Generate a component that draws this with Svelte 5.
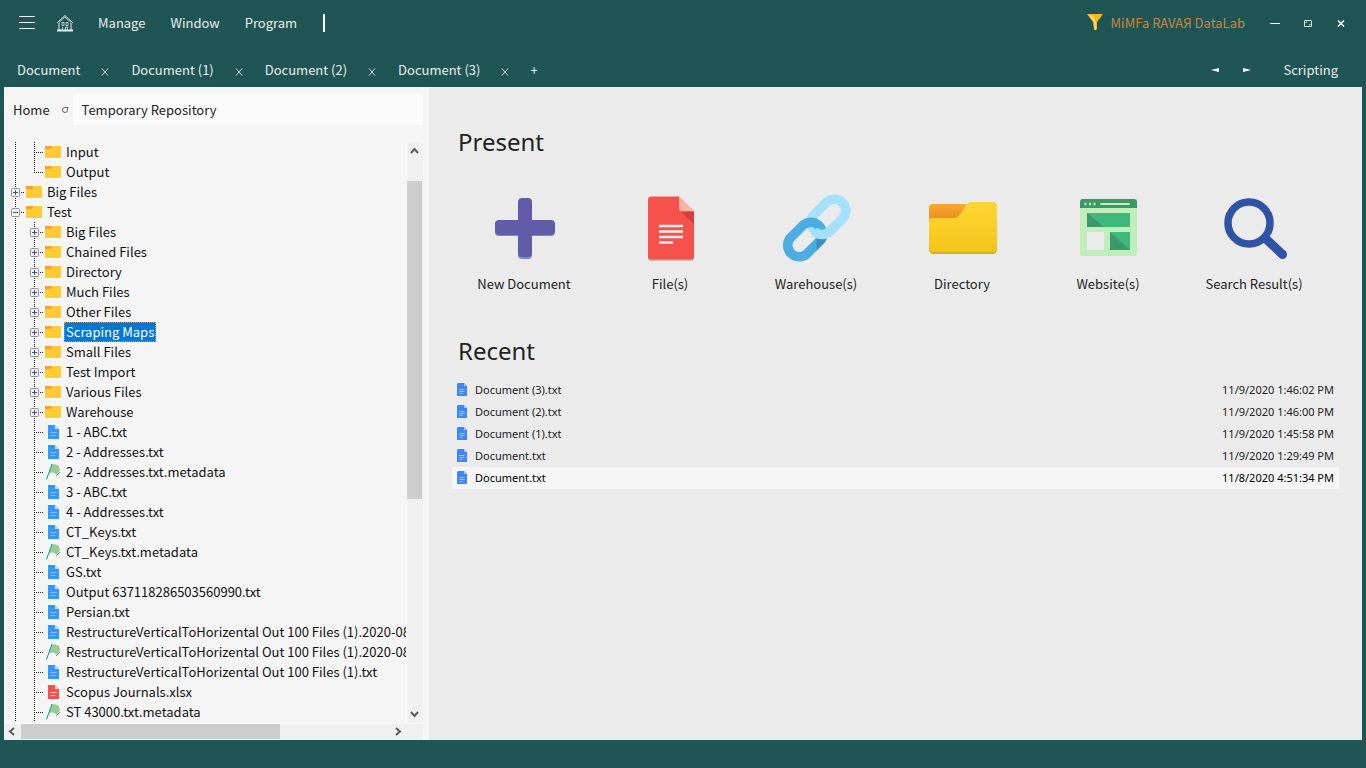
<script lang="ts">
	type Item = {
		name: string;
		kind: 'folder' | 'txt' | 'xlsx' | 'meta';
		level?: number;
		box?: 'plus' | 'minus';
		last?: boolean;
	};

	const menus = ['Manage', 'Window', 'Program'];
	const tabs = ['Document', 'Document (1)', 'Document (2)', 'Document (3)'];

	const tree: Item[] = [
		{ name: 'Input', kind: 'folder' },
		{ name: 'Output', kind: 'folder', last: true },
		{ name: 'Big Files', kind: 'folder', level: 1, box: 'plus' },
		{ name: 'Test', kind: 'folder', level: 1, box: 'minus' },
		{ name: 'Big Files', kind: 'folder', box: 'plus' },
		{ name: 'Chained Files', kind: 'folder', box: 'plus' },
		{ name: 'Directory', kind: 'folder', box: 'plus' },
		{ name: 'Much Files', kind: 'folder', box: 'plus' },
		{ name: 'Other Files', kind: 'folder', box: 'plus' },
		{ name: 'Scraping Maps', kind: 'folder', box: 'plus' },
		{ name: 'Small Files', kind: 'folder', box: 'plus' },
		{ name: 'Test Import', kind: 'folder', box: 'plus' },
		{ name: 'Various Files', kind: 'folder', box: 'plus' },
		{ name: 'Warehouse', kind: 'folder', box: 'plus' },
		{ name: '1 - ABC.txt', kind: 'txt' },
		{ name: '2 - Addresses.txt', kind: 'txt' },
		{ name: '2 - Addresses.txt.metadata', kind: 'meta' },
		{ name: '3 - ABC.txt', kind: 'txt' },
		{ name: '4 - Addresses.txt', kind: 'txt' },
		{ name: 'CT_Keys.txt', kind: 'txt' },
		{ name: 'CT_Keys.txt.metadata', kind: 'meta' },
		{ name: 'GS.txt', kind: 'txt' },
		{ name: 'Output 637118286503560990.txt', kind: 'txt' },
		{ name: 'Persian.txt', kind: 'txt' },
		{ name: 'RestructureVerticalToHorizental Out 100 Files (1).2020-08-2', kind: 'txt' },
		{ name: 'RestructureVerticalToHorizental Out 100 Files (1).2020-08-2', kind: 'meta' },
		{ name: 'RestructureVerticalToHorizental Out 100 Files (1).txt', kind: 'txt' },
		{ name: 'Scopus Journals.xlsx', kind: 'xlsx' },
		{ name: 'ST 43000.txt.metadata', kind: 'meta' }
	];

	const tiles = [
		{ label: 'New Document', icon: 'plus' },
		{ label: 'File(s)', icon: 'file' },
		{ label: 'Warehouse(s)', icon: 'chain' },
		{ label: 'Directory', icon: 'folder' },
		{ label: 'Website(s)', icon: 'site' },
		{ label: 'Search Result(s)', icon: 'search' }
	];

	const recent = [
		{ name: 'Document (3).txt', date: '11/9/2020 1:46:02 PM' },
		{ name: 'Document (2).txt', date: '11/9/2020 1:46:00 PM' },
		{ name: 'Document (1).txt', date: '11/9/2020 1:45:58 PM' },
		{ name: 'Document.txt', date: '11/9/2020 1:29:49 PM' },
		{ name: 'Document.txt', date: '11/8/2020 4:51:34 PM' }
	];

	let selected = $state(9);
	let activeRecent = $state(4);
	let path = $state('Temporary Repository');
	let command = $state('');
</script>

{#snippet guide(vertical: 'full' | 'half', branch: boolean)}
	<svg class="guide" width="19" height="20" viewBox="0 0 19 20" aria-hidden="true">
		<path d={vertical === 'full' ? 'M9.5 0V20' : 'M9.5 0V11'} stroke="#222" stroke-dasharray="1 1" />
		{#if branch}<path d="M11 10.5H20" stroke="#222" stroke-dasharray="1 1" />{/if}
	</svg>
{/snippet}

{#snippet expander(kind: string)}
	<button class="expander" aria-label={kind === 'plus' ? 'Expand' : 'Collapse'}>
		<svg width="19" height="20" viewBox="0 0 19 20">
			<path d="M9.5 0V20M15 10.5H20" stroke="#222" stroke-dasharray="1 1" />
			<rect x="5.5" y="6.5" width="8" height="8" rx="1" fill="#f4f4f4" stroke="#919191" />
			<path d={kind === 'plus' ? 'M7 10.5h5M9.5 8v5' : 'M7 10.5h5'} stroke="#3a50a8" />
		</svg>
	</button>
{/snippet}

{#snippet nodeIcon(kind: string)}
	<svg width="18" height="18" viewBox="0 0 18 18" aria-hidden="true">
		{#if kind === 'folder'}
			<path d="M1 3h8l-2 4H1z" fill="#ff9d2e" />
			<path d="M1 6h6l3-3h7v12H1z" fill="#ffcb33" />
			<path d="M1 15.5h16" stroke="#fff" />
		{:else if kind === 'meta'}
			<path d="M8 2c3-2 5 0 7 1l1 5-4 4c-1-3-4-2-7-2z" fill="#99cc99" />
			<path d="M8 1L2.500 16.500" stroke="#009999" />
			<path d="M12 13l4-4" stroke="#669999" />
		{:else}
			<path d="M4 2h7l4 4v10H4z" fill={kind === 'txt' ? '#3397ff' : '#ff4d4d'} />
			<path d="M11 2v4h4z" fill={kind === 'txt' ? '#cce4ff' : '#ffcccc'} />
			<path d="M6.500 9.500h6M6.500 12.500h5" stroke={kind === 'txt' ? '#99bbff' : '#ffcccc'} />
		{/if}
	</svg>
{/snippet}

{#snippet arrow(d: string)}
	<svg width="9" height="9" viewBox="0 0 9 9" aria-hidden="true">
		<path {d} fill="none" stroke="#5b5b5b" stroke-width="2" />
	</svg>
{/snippet}

<div class="window">
	<header class="titlebar">
		<button class="burger" aria-label="Menu">
			<svg width="16" height="16" viewBox="0 0 16 16"><path d="M0 1.500h16M0 7.500h16M0 13.500h16" stroke="#eef2f2" /></svg>
		</button>
		<button class="home" aria-label="Start page">
			<svg width="18" height="18" viewBox="0 0 18 18" fill="none" stroke="#e8eeee">
				<path d="M1 9L9 1.500 17 9M3 9v7M15 9v7" />
				<path d="M3 8.500L9 3l6 5.500M6 8.500v3h2v-3zM10 8.500v3h2v-3zM6.500 16v-3M9.500 16v-3h2v3" stroke="#b9cccc" />
				<path d="M1 16.500h16" stroke-width="2" />
			</svg>
		</button>
		<nav class="menus">
			{#each menus as menu}
				<button>{menu}</button>
			{/each}
		</nav>
		<input class="command" aria-label="Command" bind:value={command} />
		<div class="brand">
			<svg width="18" height="18" viewBox="0 0 18 18" aria-hidden="true">
				<path d="M1 0h16l-6 8v7l-1 1H8L7 8z" fill="#fbb917" />
				<path d="M3 1h3l4 7v8H9L8 8z" fill="#ffdc83" />
			</svg>
			<span>MiMFa RAVAЯ DataLab</span>
		</div>
		<div class="controls">
			<button aria-label="Minimize"><svg width="10" height="10" viewBox="0 0 10 10"><path d="M0 5.500h10" stroke="#fff" /></svg></button>
			<button aria-label="Maximize">
				<svg width="10" height="10" viewBox="0 0 10 10"><path d="M1.500 2.500h7v6h-7zM3 5V4h1M6 7h1V6" fill="none" stroke="#d9e2e2" /></svg>
			</button>
			<button aria-label="Close"><svg width="10" height="10" viewBox="0 0 10 10"><path d="M2 2.500l6 6M8 2.500l-6 6" stroke="#fff" stroke-width="1.500" /></svg></button>
		</div>
	</header>

	<div class="tabbar">
		{#each tabs as tab}
			<div class="tab">
				<button>{tab}</button>
				<button class="close" aria-label="Close {tab}">
					<svg width="8" height="8" viewBox="0 0 8 8"><path d="M1 0.500l6 7M7 0.500l-6 7" stroke="#cbd8d8" /></svg>
				</button>
			</div>
		{/each}
		<button class="add">+</button>
		<div class="tabnav">
			<button aria-label="Previous"><svg width="8" height="6" viewBox="0 0 8 6"><path d="M8 1v4L0 3z" fill="#fff" /></svg></button>
			<button aria-label="Next"><svg width="8" height="6" viewBox="0 0 8 6"><path d="M0 1v4l8-2z" fill="#fff" /></svg></button>
			<button class="scripting">Scripting</button>
		</div>
	</div>

	<div class="body">
		<aside>
			<div class="address">
				<button>Home</button>
				<button class="reload" aria-label="Reload">
					<svg width="8" height="8" viewBox="0 0 8 8"><path d="M7.500 1.500H4A2.500 2.500 0 1 0 6.500 4V2" fill="none" stroke="#666" /></svg>
				</button>
				<input aria-label="Location" bind:value={path} />
			</div>
			<div class="treebox">
				<ul class="tree">
					{#each tree as item, i}
						<li>
							{#if item.level === 1}
								{@render expander(item.box ?? 'plus')}
							{:else}
								{@render guide('full', false)}
								{#if item.box}
									{@render expander(item.box)}
								{:else}
									{@render guide(item.last ? 'half' : 'full', true)}
								{/if}
							{/if}
							{@render nodeIcon(item.kind)}
							<button class="node" class:selected={selected === i} onclick={() => (selected = i)}>{item.name}</button>
						</li>
					{/each}
				</ul>
				<div class="vbar">
					<button aria-label="Scroll up">{@render arrow('M1 7l3.500-4L8 7')}</button>
					<div class="track"><span class="before"></span><span class="thumb"></span><span class="after"></span></div>
					<button aria-label="Scroll down">{@render arrow('M1 2l3.500 4L8 2')}</button>
				</div>
				<div class="hbar">
					<button aria-label="Scroll left">{@render arrow('M6 1L2 4.500 6 8')}</button>
					<div class="track"><span class="thumb"></span><span class="after"></span></div>
					<button aria-label="Scroll right">{@render arrow('M3 1l4 3.500L3 8')}</button>
				</div>
			</div>
		</aside>

		<main>
			<h2>Present</h2>
			<div class="tiles">
				{#each tiles as tile}
					<button class="tile">
						<svg width="72" height="72" viewBox="-1 0 72 72" aria-hidden="true">
							{#if tile.icon === 'plus'}
								<path d="M33 7h6q4 0 4 4v19h19q4 0 4 4v6q0 4-4 4H43v19q0 4-4 4h-6q-4 0-4-4V44H10q-4 0-4-4v-6q0-4 4-4h19V11q0-4 4-4z" fill="#7b88cc" />
								<path d="M33 6h6q4 0 4 4v18h19q4 0 4 4v6q0 5-4 5H43v18q0 4-4 4h-6q-4 0-4-4V43H10q-4 0-4-5v-6q0-4 4-4h19V10q0-4 4-4z" fill="#615ca8" />
							{:else if tile.icon === 'file'}
								<path d="M16 5h28l15 15v46q0 3-3 3H16q-3 0-3-3V8q0-3 3-3z" fill="#c9b9b9" />
								<path d="M16 4.500h28l15 15v45q0 3-3 3H16q-3 0-3-3v-57q0-3 3-3z" fill="#f5524c" />
								<path d="M44 4.500l15 15H47q-3 0-3-3z" fill="#fbb4a4" />
								<path d="M46 19.500h13v13z" fill="#d1403f" />
								<path d="M24 34h24M24 39.500h24M24 45h24M24 50.500h14" stroke="#f1eef1" stroke-width="2.500" />
							{:else if tile.icon === 'chain'}
								<g fill="none" stroke-width="9.500">
									<path d="M45.900 9.900L32.900 22.900A11.500 11.500 0 0 0 49.100 39.100L62.100 26.100A11.500 11.500 0 0 0 45.900 9.900z" stroke="#a5e1ff" />
									<path d="M22.400 32.900L9.400 45.900A11.500 11.500 0 0 0 25.600 62.100L38.600 49.100A11.500 11.500 0 0 0 22.400 32.900z" stroke="#4bade2" />
								</g>
								<path d="M35.500 45h10.500q0 4-4.200 7.300L35.500 58.600z" fill="#3f8fc0" />
								<path d="M32.900 39.100A11.500 11.500 0 0 0 49.100 39.100L55 33.200" fill="none" stroke="#a5e1ff" stroke-width="9.500" />
							{:else if tile.icon === 'folder'}
								<path d="M6 12h30q6 0 6 5v14H2V16q0-4 4-4z" fill="url(#orange)" />
								<path d="M2 29q0-3 4-3h20q5 0 8-5l4-6q3-5 8-5h19q5 0 5 5v42q0 5-5 5H7q-5 0-5-5z" fill="#d9ad18" />
								<path d="M2 29q0-3 4-3h20q5 0 8-5l4-6q3-5 8-5h19q5 0 5 5v41q0 4-5 4H7q-5 0-5-4z" fill="url(#yellow)" />
							{:else if tile.icon === 'site'}
								<g transform="translate(-1 0)">
									<rect x="8" y="7" width="57" height="57" rx="2" fill="#bfeebb" />
									<path d="M11 7h51q3 0 3 3v6H8v-6q0-3 3-3z" fill="#3b9868" />
									<path d="M29 12h28" stroke="#bfeebb" stroke-width="2" stroke-linecap="round" />
									<path d="M12.500 12h2M17 12h2M21.500 12h2" stroke="#bfeebb" stroke-width="2.500" />
									<path d="M15 21h43v14H15zM38 40h20v18H38z" fill="#3fba7c" />
									<path d="M15 21l17 14H15zM38 40l20 18H38z" fill="#3b9868" />
									<path d="M15 40h17v18H15z" fill="#ebebeb" />
								</g>
							{:else}
								<circle cx="30" cy="31" r="21" fill="none" stroke="#2f54a5" stroke-width="7.500" />
								<path d="M45 45l18.500 17.500" stroke="#2f54a5" stroke-width="9" />
								<circle cx="63.500" cy="62.500" r="4.500" fill="#2f54a5" />
							{/if}
							<defs>
								<linearGradient id="yellow" x2="0" y2="1"><stop stop-color="#ffd633" /><stop offset="1" stop-color="#f2c51a" /></linearGradient>
								<linearGradient id="orange" x2="0" y2="1"><stop stop-color="#f9a72e" /><stop offset="1" stop-color="#e08a18" /></linearGradient>
							</defs>
						</svg>
						<span>{tile.label}</span>
					</button>
				{/each}
			</div>

			<h2>Recent</h2>
			<table class="recent">
				<tbody>
					{#each recent as file, i}
						<tr class:active={activeRecent === i} onclick={() => (activeRecent = i)}>
							<td class="icon">
								<svg width="10" height="14" viewBox="0 0 10 14" aria-hidden="true">
									<path d="M1 0h6l3 3v10H0V1z" fill="#4285f4" />
									<path d="M7 0v3h3z" fill="#a9c7fa" />
									<path d="M2.500 6.500h5M2.500 8.500h5M2.500 10.500h3" stroke="#a9c7fa" />
								</svg>
							</td>
							<td>{file.name}</td>
							<td class="date">{file.date}</td>
						</tr>
					{/each}
				</tbody>
			</table>
		</main>
	</div>
</div>

<style>
	:global(body) {
		background: #205555;
	}

	.window {
		display: flex;
		flex-direction: column;
		height: 100vh;
		box-sizing: border-box;
		padding: 0 4px 28px;
		background: #205555;
		font-family: "Noto Sans CJK SC", "Noto Sans", sans-serif;
		font-size: 13px;
		line-height: 20px;
		color: #222;
	}

	button,
	input {
		font: inherit;
		color: inherit;
		background: none;
		border: 0;
		padding: 0;
		margin: 0;
	}

	svg {
		display: block;
		flex: none;
	}

	/* title bar */
	.titlebar {
		display: flex;
		align-items: center;
		height: 46px;
		flex: none;
		padding: 0 16px 0 15px;
		color: #e9eeee;
	}

	.home {
		margin-left: 21px;
	}

	.menus {
		display: flex;
		gap: 25px;
		margin-left: 24px;
	}

	.command {
		flex: 1;
		min-width: 0;
		height: 18px;
		margin-left: 26px;
		border-left: 2px solid #fff;
		outline: none;
	}

	.brand {
		display: flex;
		align-items: center;
		gap: 7px;
		color: #cd853f;
	}

	.controls {
		display: flex;
		gap: 23px;
		margin-left: 25px;
	}

	/* document tabs */
	.tabbar {
		display: flex;
		align-items: center;
		height: 41px;
		flex: none;
		box-sizing: border-box;
		padding-top: 6px;
		color: #e9eeee;
	}

	.tab {
		display: flex;
		align-items: center;
		gap: 21px;
		padding: 0 9px 0 13px;
	}

	.tab .close {
		padding-top: 4px;
	}

	.add {
		margin-left: 12px;
	}

	.tabnav {
		display: flex;
		align-items: center;
		gap: 24px;
		margin-left: auto;
		padding-right: 24px;
	}

	.scripting {
		margin-left: 8px;
	}

	.body {
		display: flex;
		flex: 1;
		min-height: 0;
	}

	/* file tree */
	aside {
		display: flex;
		flex-direction: column;
		width: 425px;
		flex: none;
		box-sizing: border-box;
		padding: 7px 6px 0 0;
		background: #f5f5f5;
	}

	.address {
		display: flex;
		align-items: center;
		padding-left: 9px;
	}

	.reload {
		margin: 0 4px 0 11px;
	}

	.address input {
		flex: 1;
		height: 31px;
		box-sizing: border-box;
		padding-left: 9px;
		background: #fafafa;
	}

	.treebox {
		display: grid;
		grid-template-columns: 1fr 17px;
		grid-template-rows: 1fr 17px;
		flex: 1;
		min-height: 0;
		margin-top: 17px;
	}

	.tree {
		list-style: none;
		margin: 0;
		padding: 0 0 0 2px;
		overflow: hidden;
		color: #111;
	}

	.tree li {
		display: flex;
		align-items: center;
		height: 20px;
	}

	.node {
		flex: none;
		box-sizing: border-box;
		height: 20px;
		margin-left: 2px;
		padding: 0 1px;
		border: 1px solid transparent;
		line-height: 18px;
		white-space: nowrap;
	}

	.node.selected {
		background: #0078d7;
		border: 1px dotted #ff8728;
		color: #fff;
	}

	.vbar {
		display: flex;
		flex-direction: column;
		border-left: 1px solid #fff;
		background: #f0f0f0;
	}

	.vbar button,
	.hbar button {
		display: flex;
		align-items: center;
		justify-content: center;
		flex: none;
		width: 15px;
		height: 17px;
	}

	.hbar button {
		width: 17px;
		height: 15px;
	}

	.track {
		display: flex;
		flex: 1;
	}

	.vbar .track {
		flex-direction: column;
		padding-right: 1px;
	}

	.thumb {
		background: #cdcdcd;
	}

	.vbar .before {
		flex: 22;
	}

	.vbar .thumb {
		flex: 317;
	}

	.vbar .after {
		flex: 207;
	}

	.hbar {
		display: flex;
		grid-column: 1 / 3;
		box-sizing: border-box;
		padding-right: 17px;
		border-top: 1px solid #fff;
		background: #f0f0f0;
	}

	.hbar .thumb {
		flex: 259;
		margin-bottom: 1px;
	}

	.hbar .after {
		flex: 109;
	}

	/* start page */
	main {
		flex: 1;
		min-width: 0;
		padding: 38px 23px 0;
		background: #ebebeb;
	}

	h2 {
		margin: 0;
		padding-left: 6px;
		font-family: "Noto Sans", "Open Sans", sans-serif;
		font-size: 24px;
		font-weight: 400;
		line-height: 34px;
	}

	.tiles {
		display: flex;
		flex-wrap: wrap;
		margin: 33px 0 40px -1px;
	}

	.tile {
		display: flex;
		flex-direction: column;
		align-items: center;
		width: 146px;
		gap: 10px;
	}

	.recent {
		width: 100%;
		margin-top: 11px;
		border-collapse: collapse;
		font-family: "Noto Sans", "Open Sans", sans-serif;
		font-size: 11px;
	}

	.recent td {
		height: 22px;
		padding: 0;
	}

	.recent .icon {
		width: 18px;
		padding-left: 5px;
	}

	.recent .date {
		padding-right: 5px;
		text-align: right;
	}

	.recent .active {
		background: #f5f5f5;
		color: #000;
	}
</style>
